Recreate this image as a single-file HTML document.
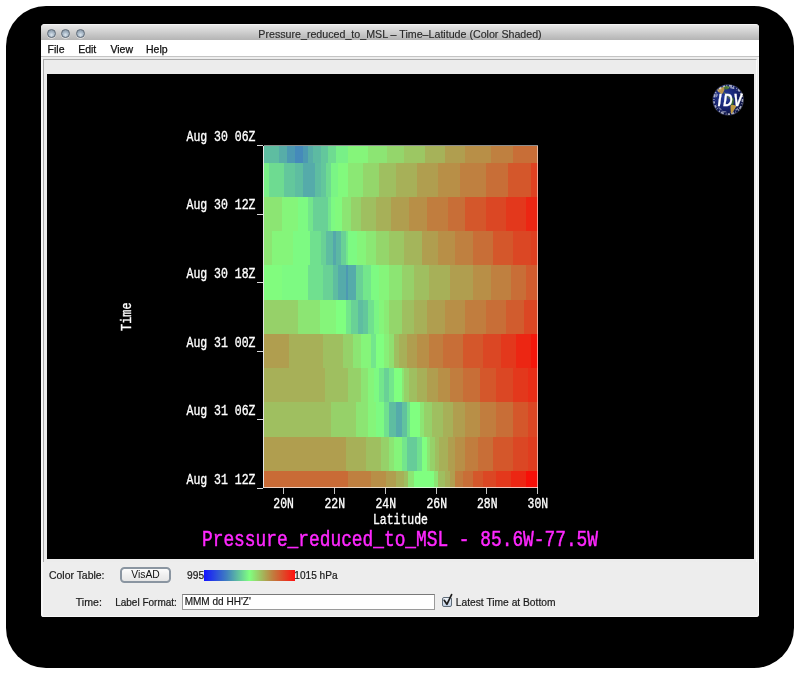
<!DOCTYPE html>
<html><head><meta charset="utf-8"><title>Pressure_reduced_to_MSL - Time&#8211;Latitude (Color Shaded)</title>
<style>
html,body{margin:0;padding:0;}
body{width:800px;height:674px;position:relative;overflow:hidden;background:#fff;font-family:"Liberation Sans",sans-serif;}
#shadow{position:absolute;left:6px;top:6px;width:788px;height:662px;background:#000;border-radius:40px;}
#win{box-shadow:inset -1px -1px 0 #f8f8f8;will-change:transform;position:absolute;left:41px;top:24px;width:718px;height:593px;background:#ededed;border-radius:4px 4px 3px 3px;overflow:hidden;}
#tb{position:absolute;left:0;top:0;width:718px;height:16.4px;background:linear-gradient(#e8e8e8,#d0d0d0 45%,#b4b4b4);border-top:1px solid #f4f4f4;box-sizing:border-box;}
#title{-webkit-text-stroke:0.15px #2a2a2a;position:absolute;left:0;width:718px;top:2.7px;text-align:center;font-size:10.67px;line-height:13px;color:#2a2a2a;}
.tl{position:absolute;top:3.6px;width:9px;height:9px;border-radius:50%;box-sizing:border-box;border:1.2px solid #5f6b78;background:radial-gradient(circle at 50% 70%,#dce6ee 0%,#a9b9c8 45%,#7c8c9c 100%);box-shadow:0 0.8px 0.5px rgba(255,255,255,.65);}
#mb{position:absolute;left:0;top:16px;width:718px;height:17px;background:#fff;border-bottom:1px solid #c4c4c4;box-sizing:border-box;}
.mi{-webkit-text-stroke:0.25px #111;position:absolute;top:2.7px;font-size:10.5px;line-height:13px;color:#111;}
#panel{position:absolute;left:2px;top:35px;width:714px;height:503px;border:1px solid #ababab;border-right-color:#fafafa;border-bottom:none;box-sizing:border-box;background:#ececec;}
#disp{position:absolute;left:6px;top:50px;width:707px;height:485px;background:#000;}
.lb{-webkit-text-stroke:0.2px #1a1a1a;position:absolute;font-size:10.4px;line-height:12px;color:#1a1a1a;white-space:nowrap;}
#btn{position:absolute;left:79px;top:542.5px;width:51px;height:16px;box-sizing:border-box;border:2px solid #8a95a1;border-radius:4.5px;background:linear-gradient(#fcfcfc,#f0f0f0 50%,#e6e6e6);font-size:10.3px;line-height:11px;text-align:center;color:#111;}
#cbar{position:absolute;left:163.2px;top:546.4px;width:90.6px;height:10.2px;background:linear-gradient(90deg,#1414ff 0%,#4080bf 25%,#80ff80 50%,#bf8040 75%,#ff1010 100%);}
#tf{position:absolute;left:141px;top:570px;width:253px;height:16px;box-sizing:border-box;border:1px solid #9a9a9a;border-top-color:#7a7a7a;background:#fff;}
#cbx{position:absolute;left:401.3px;top:572.6px;width:10px;height:10px;box-sizing:border-box;border:1px solid #5e6b78;border-radius:2px;background:linear-gradient(#eef3f9,#c2d2e6);}
svg{position:absolute;left:0;top:0;will-change:transform;}
.m{font-family:"Liberation Mono",monospace;}
</style></head><body>
<div id="shadow"></div>
<div id="win">
  <div id="tb">
    <div class="tl" style="left:6px"></div><div class="tl" style="left:20px"></div><div class="tl" style="left:35px"></div>
    <div id="title">Pressure_reduced_to_MSL &#8211; Time&#8211;Latitude (Color Shaded)</div>
  </div>
  <div id="mb">
    <span class="mi" style="left:6.6px">File</span><span class="mi" style="left:37.2px">Edit</span><span class="mi" style="left:69.4px">View</span><span class="mi" style="left:105px">Help</span>
  </div>
  <div style="position:absolute;left:0;top:33px;width:2px;height:560px;background:#f7f7f7"></div>
  <div id="panel"></div>
  <div id="disp"></div>
  <span class="lb" style="left:8px;top:546.2px;font-size:10.44px">Color Table:</span>
  <div id="btn">VisAD</div>
  <span class="lb" style="left:146.1px;top:546.2px;font-size:10.2px">995</span>
  <div id="cbar"></div>
  <span class="lb" style="left:253.3px;top:546.2px;font-size:10.1px">1015 hPa</span>
  <span class="lb" style="left:34.8px;top:572.2px;font-size:10.6px">Time:</span>
  <span class="lb" style="left:74.2px;top:573px;font-size:10px">Label Format:</span>
  <div id="tf"><span class="lb" style="left:1.7px;top:1.1px;font-size:10.03px">MMM dd HH'Z'</span></div>
  <div id="cbx"></div>
  <svg style="left:400px;top:568px" width="14" height="16" viewBox="0 0 14 16"><path d="M3.2 8.3 L5.9 12.3 L10.6 2.6" fill="none" stroke="#1c1c1c" stroke-width="1.7" stroke-linecap="round" stroke-linejoin="round"/></svg>
  <span class="lb" style="left:414.8px;top:572.5px;font-size:10.25px">Latest Time at Bottom</span>
</div>
<svg width="800" height="674" viewBox="0 0 800 674">
<g shape-rendering="crispEdges">
<rect x="263.0" y="145.5" width="16.6" height="17.4" fill="#5ebda1"/>
<rect x="279.3" y="145.5" width="8.2" height="17.4" fill="#57ada8"/>
<rect x="287.2" y="145.5" width="7.8" height="17.4" fill="#4c99b2"/>
<rect x="294.7" y="145.5" width="8.3" height="17.4" fill="#458aba"/>
<rect x="302.7" y="145.5" width="5.4" height="17.4" fill="#4c99b2"/>
<rect x="307.8" y="145.5" width="5.4" height="17.4" fill="#57ada8"/>
<rect x="312.9" y="145.5" width="8.3" height="17.4" fill="#5dbaa2"/>
<rect x="320.9" y="145.5" width="7.3" height="17.4" fill="#63c79c"/>
<rect x="327.9" y="145.5" width="8.3" height="17.4" fill="#6edb91"/>
<rect x="335.9" y="145.5" width="12.5" height="17.4" fill="#78f087"/>
<rect x="348.1" y="145.5" width="20.0" height="17.4" fill="#85f57a"/>
<rect x="367.8" y="145.5" width="19.1" height="17.4" fill="#8ce573"/>
<rect x="386.6" y="145.5" width="17.8" height="17.4" fill="#94d66b"/>
<rect x="404.1" y="145.5" width="21.0" height="17.4" fill="#9cc763"/>
<rect x="424.8" y="145.5" width="20.5" height="17.4" fill="#a6b259"/>
<rect x="445.0" y="145.5" width="20.3" height="17.4" fill="#b09e4f"/>
<rect x="465.0" y="145.5" width="26.3" height="17.4" fill="#b88f47"/>
<rect x="491.0" y="145.5" width="22.3" height="17.4" fill="#bf8040"/>
<rect x="513.0" y="145.5" width="25.0" height="17.4" fill="#c86e37"/>
<rect x="263.0" y="162.6" width="6.7" height="34.6" fill="#78f087"/>
<rect x="269.4" y="162.6" width="15.3" height="34.6" fill="#6edb91"/>
<rect x="284.4" y="162.6" width="10.6" height="34.6" fill="#63c79c"/>
<rect x="294.7" y="162.6" width="8.3" height="34.6" fill="#5ebda1"/>
<rect x="302.7" y="162.6" width="12.4" height="34.6" fill="#55abaa"/>
<rect x="314.8" y="162.6" width="6.4" height="34.6" fill="#5ebda1"/>
<rect x="320.9" y="162.6" width="5.0" height="34.6" fill="#63c79c"/>
<rect x="325.6" y="162.6" width="5.6" height="34.6" fill="#6edb91"/>
<rect x="330.9" y="162.6" width="7.2" height="34.6" fill="#7af585"/>
<rect x="337.8" y="162.6" width="10.6" height="34.6" fill="#82fa7d"/>
<rect x="348.1" y="162.6" width="15.3" height="34.6" fill="#8be874"/>
<rect x="363.1" y="162.6" width="16.3" height="34.6" fill="#94d66b"/>
<rect x="379.1" y="162.6" width="17.1" height="34.6" fill="#9fbf60"/>
<rect x="395.9" y="162.6" width="20.9" height="34.6" fill="#a7b058"/>
<rect x="416.5" y="162.6" width="21.3" height="34.6" fill="#b09e4f"/>
<rect x="437.5" y="162.6" width="22.8" height="34.6" fill="#b88f47"/>
<rect x="460.0" y="162.6" width="26.2" height="34.6" fill="#bf8040"/>
<rect x="485.9" y="162.6" width="22.2" height="34.6" fill="#c86e37"/>
<rect x="507.8" y="162.6" width="23.8" height="34.6" fill="#d4572b"/>
<rect x="531.3" y="162.6" width="6.7" height="34.6" fill="#de4221"/>
<rect x="263.0" y="196.9" width="19.4" height="34.5" fill="#8ce573"/>
<rect x="282.1" y="196.9" width="15.7" height="34.5" fill="#85f57a"/>
<rect x="297.5" y="196.9" width="10.6" height="34.5" fill="#7dfa82"/>
<rect x="307.8" y="196.9" width="5.4" height="34.5" fill="#73e68c"/>
<rect x="312.9" y="196.9" width="14.9" height="34.5" fill="#69d196"/>
<rect x="327.5" y="196.9" width="4.1" height="34.5" fill="#73e68c"/>
<rect x="331.3" y="196.9" width="4.0" height="34.5" fill="#7dfa82"/>
<rect x="335.0" y="196.9" width="6.9" height="34.5" fill="#82fa7d"/>
<rect x="341.6" y="196.9" width="10.0" height="34.5" fill="#8ce573"/>
<rect x="351.3" y="196.9" width="10.3" height="34.5" fill="#96d169"/>
<rect x="361.3" y="196.9" width="15.3" height="34.5" fill="#9fbf60"/>
<rect x="376.3" y="196.9" width="15.3" height="34.5" fill="#a7b058"/>
<rect x="391.3" y="196.9" width="18.4" height="34.5" fill="#b09e4f"/>
<rect x="409.4" y="196.9" width="17.5" height="34.5" fill="#b88f47"/>
<rect x="426.6" y="196.9" width="21.5" height="34.5" fill="#c17d3e"/>
<rect x="447.8" y="196.9" width="17.5" height="34.5" fill="#c86e37"/>
<rect x="465.0" y="196.9" width="21.2" height="34.5" fill="#d4572b"/>
<rect x="485.9" y="196.9" width="20.4" height="34.5" fill="#db4724"/>
<rect x="506.0" y="196.9" width="20.3" height="34.5" fill="#e3381c"/>
<rect x="526.0" y="196.9" width="12.0" height="34.5" fill="#ec2613"/>
<rect x="263.0" y="231.1" width="9.5" height="34.6" fill="#8ce573"/>
<rect x="272.2" y="231.1" width="20.9" height="34.6" fill="#85f57a"/>
<rect x="292.8" y="231.1" width="17.2" height="34.6" fill="#7dfa82"/>
<rect x="309.7" y="231.1" width="11.5" height="34.6" fill="#70e08f"/>
<rect x="320.9" y="231.1" width="5.0" height="34.6" fill="#69d196"/>
<rect x="325.6" y="231.1" width="7.5" height="34.6" fill="#5ebda1"/>
<rect x="332.8" y="231.1" width="3.4" height="34.6" fill="#54a8ab"/>
<rect x="335.9" y="231.1" width="5.4" height="34.6" fill="#5cb8a3"/>
<rect x="341.0" y="231.1" width="5.2" height="34.6" fill="#69d196"/>
<rect x="345.9" y="231.1" width="2.5" height="34.6" fill="#73e68c"/>
<rect x="348.1" y="231.1" width="8.8" height="34.6" fill="#7dfa82"/>
<rect x="356.6" y="231.1" width="9.6" height="34.6" fill="#85f57a"/>
<rect x="365.9" y="231.1" width="10.7" height="34.6" fill="#8be874"/>
<rect x="376.3" y="231.1" width="13.4" height="34.6" fill="#94d66b"/>
<rect x="389.4" y="231.1" width="15.0" height="34.6" fill="#9cc763"/>
<rect x="404.1" y="231.1" width="18.3" height="34.6" fill="#a4b55b"/>
<rect x="422.1" y="231.1" width="16.2" height="34.6" fill="#b09e4f"/>
<rect x="438.0" y="231.1" width="17.1" height="34.6" fill="#b88f47"/>
<rect x="454.8" y="231.1" width="18.3" height="34.6" fill="#bf8040"/>
<rect x="472.8" y="231.1" width="20.3" height="34.6" fill="#c86e37"/>
<rect x="492.8" y="231.1" width="20.5" height="34.6" fill="#d4572b"/>
<rect x="513.0" y="231.1" width="18.6" height="34.6" fill="#db4724"/>
<rect x="531.3" y="231.1" width="6.7" height="34.6" fill="#df4020"/>
<rect x="263.0" y="265.4" width="19.4" height="34.5" fill="#81fc7e"/>
<rect x="282.1" y="265.4" width="26.0" height="34.5" fill="#7dfa82"/>
<rect x="307.8" y="265.4" width="15.3" height="34.5" fill="#70e08f"/>
<rect x="322.8" y="265.4" width="10.3" height="34.5" fill="#69d196"/>
<rect x="332.8" y="265.4" width="5.3" height="34.5" fill="#5ebda1"/>
<rect x="337.8" y="265.4" width="8.4" height="34.5" fill="#55abaa"/>
<rect x="345.9" y="265.4" width="2.5" height="34.5" fill="#4c99b2"/>
<rect x="348.1" y="265.4" width="8.2" height="34.5" fill="#55abaa"/>
<rect x="356.0" y="265.4" width="7.1" height="34.5" fill="#69d196"/>
<rect x="362.8" y="265.4" width="8.1" height="34.5" fill="#73e68c"/>
<rect x="370.6" y="265.4" width="8.8" height="34.5" fill="#7dfa82"/>
<rect x="379.1" y="265.4" width="10.6" height="34.5" fill="#85f57a"/>
<rect x="389.4" y="265.4" width="12.8" height="34.5" fill="#8ce573"/>
<rect x="401.9" y="265.4" width="12.4" height="34.5" fill="#96d169"/>
<rect x="414.0" y="265.4" width="15.7" height="34.5" fill="#9fbf60"/>
<rect x="429.4" y="265.4" width="20.6" height="34.5" fill="#a7b058"/>
<rect x="449.7" y="265.4" width="23.4" height="34.5" fill="#b09e4f"/>
<rect x="472.8" y="265.4" width="18.5" height="34.5" fill="#b88f47"/>
<rect x="491.0" y="265.4" width="20.3" height="34.5" fill="#bf8040"/>
<rect x="511.0" y="265.4" width="15.3" height="34.5" fill="#c86e37"/>
<rect x="526.0" y="265.4" width="12.0" height="34.5" fill="#d15c2e"/>
<rect x="263.0" y="299.6" width="34.8" height="34.6" fill="#96d169"/>
<rect x="297.5" y="299.6" width="23.2" height="34.6" fill="#8ce573"/>
<rect x="320.4" y="299.6" width="15.8" height="34.6" fill="#85f57a"/>
<rect x="335.9" y="299.6" width="10.3" height="34.6" fill="#80ff80"/>
<rect x="345.9" y="299.6" width="5.3" height="34.6" fill="#73e68c"/>
<rect x="350.9" y="299.6" width="6.9" height="34.6" fill="#69d196"/>
<rect x="357.5" y="299.6" width="5.6" height="34.6" fill="#5ebda1"/>
<rect x="362.8" y="299.6" width="5.3" height="34.6" fill="#63c79c"/>
<rect x="367.8" y="299.6" width="6.5" height="34.6" fill="#70e08f"/>
<rect x="374.0" y="299.6" width="5.4" height="34.6" fill="#7af585"/>
<rect x="379.1" y="299.6" width="5.0" height="34.6" fill="#85f57a"/>
<rect x="383.8" y="299.6" width="5.9" height="34.6" fill="#8aeb75"/>
<rect x="389.4" y="299.6" width="12.5" height="34.6" fill="#94d66b"/>
<rect x="401.6" y="299.6" width="12.7" height="34.6" fill="#9fbf60"/>
<rect x="414.0" y="299.6" width="12.9" height="34.6" fill="#a7b058"/>
<rect x="426.6" y="299.6" width="18.7" height="34.6" fill="#b09e4f"/>
<rect x="445.0" y="299.6" width="20.3" height="34.6" fill="#b88f47"/>
<rect x="465.0" y="299.6" width="21.2" height="34.6" fill="#c17d3e"/>
<rect x="485.9" y="299.6" width="20.4" height="34.6" fill="#c86e37"/>
<rect x="506.0" y="299.6" width="18.1" height="34.6" fill="#d15c2e"/>
<rect x="523.8" y="299.6" width="14.2" height="34.6" fill="#db4724"/>
<rect x="263.0" y="333.9" width="26.7" height="34.5" fill="#b09e4f"/>
<rect x="289.4" y="333.9" width="33.7" height="34.5" fill="#a7b058"/>
<rect x="322.8" y="333.9" width="20.4" height="34.5" fill="#9fbf60"/>
<rect x="342.9" y="333.9" width="10.6" height="34.5" fill="#96d169"/>
<rect x="353.2" y="333.9" width="8.4" height="34.5" fill="#8ce573"/>
<rect x="361.3" y="333.9" width="9.6" height="34.5" fill="#85f57a"/>
<rect x="370.6" y="333.9" width="5.4" height="34.5" fill="#73e68c"/>
<rect x="375.7" y="333.9" width="8.4" height="34.5" fill="#80ff80"/>
<rect x="383.8" y="333.9" width="5.9" height="34.5" fill="#87f078"/>
<rect x="389.4" y="333.9" width="4.9" height="34.5" fill="#8fe070"/>
<rect x="394.0" y="333.9" width="5.4" height="34.5" fill="#9fbf60"/>
<rect x="399.1" y="333.9" width="7.8" height="34.5" fill="#a7b058"/>
<rect x="406.6" y="333.9" width="10.6" height="34.5" fill="#b09e4f"/>
<rect x="416.9" y="333.9" width="12.8" height="34.5" fill="#b88f47"/>
<rect x="429.4" y="333.9" width="13.7" height="34.5" fill="#c17d3e"/>
<rect x="442.8" y="333.9" width="20.3" height="34.5" fill="#c86e37"/>
<rect x="462.8" y="333.9" width="20.4" height="34.5" fill="#d4572b"/>
<rect x="482.9" y="333.9" width="18.7" height="34.5" fill="#db4724"/>
<rect x="501.3" y="333.9" width="14.7" height="34.5" fill="#e3381c"/>
<rect x="515.7" y="333.9" width="15.3" height="34.5" fill="#ec2613"/>
<rect x="530.7" y="333.9" width="7.3" height="34.5" fill="#f4170b"/>
<rect x="263.0" y="368.1" width="62.4" height="34.6" fill="#a7b058"/>
<rect x="325.1" y="368.1" width="23.0" height="34.6" fill="#9fbf60"/>
<rect x="347.8" y="368.1" width="13.8" height="34.6" fill="#96d169"/>
<rect x="361.3" y="368.1" width="6.8" height="34.6" fill="#8ce573"/>
<rect x="367.8" y="368.1" width="6.9" height="34.6" fill="#85f57a"/>
<rect x="374.4" y="368.1" width="5.0" height="34.6" fill="#7dfa82"/>
<rect x="379.1" y="368.1" width="5.0" height="34.6" fill="#73e68c"/>
<rect x="383.8" y="368.1" width="5.9" height="34.6" fill="#69d196"/>
<rect x="389.4" y="368.1" width="4.9" height="34.6" fill="#73e68c"/>
<rect x="394.0" y="368.1" width="7.9" height="34.6" fill="#80ff80"/>
<rect x="401.6" y="368.1" width="2.5" height="34.6" fill="#8ce573"/>
<rect x="403.8" y="368.1" width="5.9" height="34.6" fill="#96d169"/>
<rect x="409.4" y="368.1" width="7.8" height="34.6" fill="#9fbf60"/>
<rect x="416.9" y="368.1" width="10.0" height="34.6" fill="#a7b058"/>
<rect x="426.6" y="368.1" width="11.7" height="34.6" fill="#b09e4f"/>
<rect x="438.0" y="368.1" width="12.0" height="34.6" fill="#b88f47"/>
<rect x="449.7" y="368.1" width="13.4" height="34.6" fill="#c17d3e"/>
<rect x="462.8" y="368.1" width="17.8" height="34.6" fill="#c86e37"/>
<rect x="480.3" y="368.1" width="16.0" height="34.6" fill="#d4572b"/>
<rect x="496.0" y="368.1" width="17.3" height="34.6" fill="#db4724"/>
<rect x="513.0" y="368.1" width="15.7" height="34.6" fill="#e3381c"/>
<rect x="528.4" y="368.1" width="9.6" height="34.6" fill="#e82e17"/>
<rect x="263.0" y="402.4" width="68.0" height="34.5" fill="#9fbf60"/>
<rect x="330.7" y="402.4" width="25.6" height="34.5" fill="#96d169"/>
<rect x="356.0" y="402.4" width="12.1" height="34.5" fill="#8ce573"/>
<rect x="367.8" y="402.4" width="8.8" height="34.5" fill="#85f57a"/>
<rect x="376.3" y="402.4" width="7.8" height="34.5" fill="#7dfa82"/>
<rect x="383.8" y="402.4" width="5.9" height="34.5" fill="#70e08f"/>
<rect x="389.4" y="402.4" width="6.8" height="34.5" fill="#5ebda1"/>
<rect x="395.9" y="402.4" width="6.3" height="34.5" fill="#55abaa"/>
<rect x="401.9" y="402.4" width="5.0" height="34.5" fill="#61c29e"/>
<rect x="406.6" y="402.4" width="4.0" height="34.5" fill="#70e08f"/>
<rect x="410.3" y="402.4" width="9.7" height="34.5" fill="#80ff80"/>
<rect x="419.7" y="402.4" width="5.0" height="34.5" fill="#8ce573"/>
<rect x="424.4" y="402.4" width="8.2" height="34.5" fill="#96d169"/>
<rect x="432.3" y="402.4" width="10.8" height="34.5" fill="#9fbf60"/>
<rect x="442.8" y="402.4" width="10.4" height="34.5" fill="#a7b058"/>
<rect x="452.9" y="402.4" width="12.4" height="34.5" fill="#b09e4f"/>
<rect x="465.0" y="402.4" width="15.6" height="34.5" fill="#b88f47"/>
<rect x="480.3" y="402.4" width="16.0" height="34.5" fill="#c17d3e"/>
<rect x="496.0" y="402.4" width="17.3" height="34.5" fill="#c86e37"/>
<rect x="513.0" y="402.4" width="15.7" height="34.5" fill="#d4572b"/>
<rect x="528.4" y="402.4" width="9.6" height="34.5" fill="#db4724"/>
<rect x="263.0" y="436.6" width="83.2" height="34.6" fill="#b09e4f"/>
<rect x="345.9" y="436.6" width="20.3" height="34.6" fill="#a7b058"/>
<rect x="365.9" y="436.6" width="15.3" height="34.6" fill="#9fbf60"/>
<rect x="380.9" y="436.6" width="8.8" height="34.6" fill="#96d169"/>
<rect x="389.4" y="436.6" width="4.9" height="34.6" fill="#8ce573"/>
<rect x="394.0" y="436.6" width="7.9" height="34.6" fill="#85f57a"/>
<rect x="401.6" y="436.6" width="5.3" height="34.6" fill="#73e68c"/>
<rect x="406.6" y="436.6" width="10.6" height="34.6" fill="#66cc99"/>
<rect x="416.9" y="436.6" width="5.0" height="34.6" fill="#70e08f"/>
<rect x="421.6" y="436.6" width="5.3" height="34.6" fill="#80ff80"/>
<rect x="426.6" y="436.6" width="3.7" height="34.6" fill="#8ce573"/>
<rect x="430.0" y="436.6" width="5.0" height="34.6" fill="#96d169"/>
<rect x="434.7" y="436.6" width="5.0" height="34.6" fill="#9fbf60"/>
<rect x="439.4" y="436.6" width="8.7" height="34.6" fill="#a7b058"/>
<rect x="447.8" y="436.6" width="7.8" height="34.6" fill="#b09e4f"/>
<rect x="455.3" y="436.6" width="10.0" height="34.6" fill="#b88f47"/>
<rect x="465.0" y="436.6" width="13.1" height="34.6" fill="#c17d3e"/>
<rect x="477.8" y="436.6" width="15.7" height="34.6" fill="#c86e37"/>
<rect x="493.2" y="436.6" width="20.1" height="34.6" fill="#d4572b"/>
<rect x="513.0" y="436.6" width="15.7" height="34.6" fill="#db4724"/>
<rect x="528.4" y="436.6" width="9.6" height="34.6" fill="#e03d1f"/>
<rect x="263.0" y="470.9" width="85.1" height="17.4" fill="#c96b36"/>
<rect x="347.8" y="470.9" width="23.5" height="17.4" fill="#bf8040"/>
<rect x="371.0" y="470.9" width="15.3" height="17.4" fill="#b88f47"/>
<rect x="386.0" y="470.9" width="10.2" height="17.4" fill="#b09e4f"/>
<rect x="395.9" y="470.9" width="8.2" height="17.4" fill="#a7b058"/>
<rect x="403.8" y="470.9" width="4.4" height="17.4" fill="#9fbf60"/>
<rect x="407.9" y="470.9" width="6.4" height="17.4" fill="#8ce573"/>
<rect x="414.0" y="470.9" width="20.1" height="17.4" fill="#80ff80"/>
<rect x="433.8" y="470.9" width="4.0" height="17.4" fill="#8ce573"/>
<rect x="437.5" y="470.9" width="7.8" height="17.4" fill="#9fbf60"/>
<rect x="445.0" y="470.9" width="5.0" height="17.4" fill="#a7b058"/>
<rect x="449.7" y="470.9" width="5.9" height="17.4" fill="#b09e4f"/>
<rect x="455.3" y="470.9" width="7.8" height="17.4" fill="#c17d3e"/>
<rect x="462.8" y="470.9" width="10.3" height="17.4" fill="#c86e37"/>
<rect x="472.8" y="470.9" width="10.4" height="17.4" fill="#d4572b"/>
<rect x="482.9" y="470.9" width="13.4" height="17.4" fill="#db4724"/>
<rect x="496.0" y="470.9" width="15.3" height="17.4" fill="#e3381c"/>
<rect x="511.0" y="470.9" width="15.3" height="17.4" fill="#ec2613"/>
<rect x="526.0" y="470.9" width="12.0" height="17.4" fill="#f70f08"/>
</g>
<!-- axes box -->
<g stroke="#d8d8d8" stroke-width="1" fill="none" shape-rendering="crispEdges">
<path d="M263.5 488 V145.5" stroke="#e4e4e4"/><path d="M263.5 145.5 H537.5 V488" stroke="#ffffff" stroke-opacity="0.55"/><path d="M263.5 487.5 H538" stroke="#ffffff" stroke-opacity="0.7"/>
<path d="M257 145.5H263 M257 214.5H263 M257 282.5H263 M257 351.5H263 M257 419.5H263 M257 488H263"/>
<path d="M283.5 488V494 M334.5 488V494 M385.5 488V494 M436.5 488V494 M486.5 488V494 M537.5 488V494" stroke="#c4c4c4"/>
</g>
<g class="m" fill="#fff" stroke="#fff" stroke-width="0.35" font-size="13.8" font-family="Liberation Mono">
<text x="186.5" y="140.7" textLength="69" lengthAdjust="spacingAndGlyphs">Aug 30 06Z</text>
<text x="186.5" y="209.3" textLength="69" lengthAdjust="spacingAndGlyphs">Aug 30 12Z</text>
<text x="186.5" y="277.9" textLength="69" lengthAdjust="spacingAndGlyphs">Aug 30 18Z</text>
<text x="186.5" y="346.5" textLength="69" lengthAdjust="spacingAndGlyphs">Aug 31 00Z</text>
<text x="186.5" y="415.1" textLength="69" lengthAdjust="spacingAndGlyphs">Aug 31 06Z</text>
<text x="186.5" y="483.7" textLength="69" lengthAdjust="spacingAndGlyphs">Aug 31 12Z</text>
<text x="273.3" y="508" textLength="20.5" lengthAdjust="spacingAndGlyphs">20N</text>
<text x="324.5" y="508" textLength="20.5" lengthAdjust="spacingAndGlyphs">22N</text>
<text x="375.5" y="508" textLength="20.5" lengthAdjust="spacingAndGlyphs">24N</text>
<text x="426.5" y="508" textLength="20.5" lengthAdjust="spacingAndGlyphs">26N</text>
<text x="477" y="508" textLength="20.5" lengthAdjust="spacingAndGlyphs">28N</text>
<text x="527.6" y="508" textLength="20.5" lengthAdjust="spacingAndGlyphs">30N</text>
<text x="373" y="524" textLength="55" lengthAdjust="spacingAndGlyphs">Latitude</text>
<text transform="translate(130.6,331) rotate(-90)" x="0" y="0" textLength="28.6" lengthAdjust="spacingAndGlyphs">Time</text>
</g>
<text class="m" x="202" y="545.6" fill="#ff28ff" stroke="#ff28ff" stroke-width="0.5" font-size="21.4" font-family="Liberation Mono" textLength="396" lengthAdjust="spacingAndGlyphs">Pressure_reduced_to_MSL - 85.6W-77.5W</text>
<defs>
<radialGradient id="oc" cx="40%" cy="38%" r="65%"><stop offset="0" stop-color="#263c9c"/><stop offset="0.6" stop-color="#16226e"/><stop offset="1" stop-color="#090e3a"/></radialGradient>
<clipPath id="gc"><circle cx="0" cy="0" r="15.4"/></clipPath>
</defs>
<g transform="translate(728.2,99.9)">
<circle r="15.7" fill="#7f8ab0" opacity="0.45"/>
<circle r="15.2" fill="url(#oc)"/>
<g clip-path="url(#gc)">
<path d="M-11 -9.5 C-9.5 -12 -7 -13 -4.5 -13 C-3.5 -11.5 -3.5 -10 -4.5 -8.5 C-5 -7 -6 -5.5 -7.2 -6.2 C-8.2 -7.8 -10 -7.5 -11 -9.5Z" fill="#b8944a"/>
<path d="M-5 -13.3 C-2.5 -14.6 0.5 -14.2 1.6 -12.6 C0.8 -10.8 -0.8 -10.2 -2.4 -10.4 C-3.2 -11 -4.5 -11.5 -5 -13.3Z" fill="#4a7434"/>
<path d="M-4.2 -8 C-2 -6.5 -0.5 -4.5 1.2 -2.8 L2 -1.2 L1 -1 C-0.5 -2.6 -2.6 -4.6 -4.4 -6.6Z" fill="#5f8040" opacity=".8"/>
<path d="M2 -3 C3.6 -3.6 5.2 -2.4 5.6 -0.4 C5.8 2 5.2 4.2 4.8 6 L2.6 6.4 C2 3.5 1.6 0 2 -3Z" fill="#3c6a2e"/>
<path d="M2.4 5.6 C4.2 4.8 7.2 5.2 8 6.6 C7.2 8.4 5.8 9.8 5 11.6 C4.2 13 3.6 14 3.2 14.8 C2.4 12 2.2 8.6 2.4 5.6Z" fill="#c09a3e"/>
<circle r="14.3" fill="none" stroke="#fff" stroke-width="1.7" stroke-dasharray="2.2 1.4 0.8 1.9 3.1 1.1 1.2 2.4 0.7 1.3 2.6 1.8" opacity=".62"/>
<circle r="12.6" fill="none" stroke="#fff" stroke-width="1.1" stroke-dasharray="1.2 3.3 0.6 2.7 1.8 4.1 0.9 2.2" opacity=".2"/>
<g fill="#fff">
<ellipse cx="-11.5" cy="-4.5" rx="1" ry="1.8" opacity=".45" transform="rotate(25 -11.5 -4.5)"/>
<ellipse cx="-8" cy="9" rx="1.8" ry="0.7" opacity=".4" transform="rotate(40 -8 9)"/>
<ellipse cx="8.5" cy="9.5" rx="1.6" ry="0.7" opacity=".5" transform="rotate(-35 8.5 9.5)"/>
<ellipse cx="4" cy="-12" rx="2.4" ry="0.8" opacity=".5" transform="rotate(12 4 -12)"/>
<ellipse cx="-4" cy="11.8" rx="2.2" ry="0.7" opacity=".4"/>
</g>
</g>
<text transform="translate(-10.5,5.6) scale(0.8,1)" x="0" y="0" font-family="Liberation Sans" font-weight="bold" font-style="italic" font-size="16" fill="#fff" stroke="#fff" stroke-width="0.3">I<tspan dx="2.6">D</tspan><tspan dx="1.2">V</tspan></text>
</g>
</svg>
</body></html>
